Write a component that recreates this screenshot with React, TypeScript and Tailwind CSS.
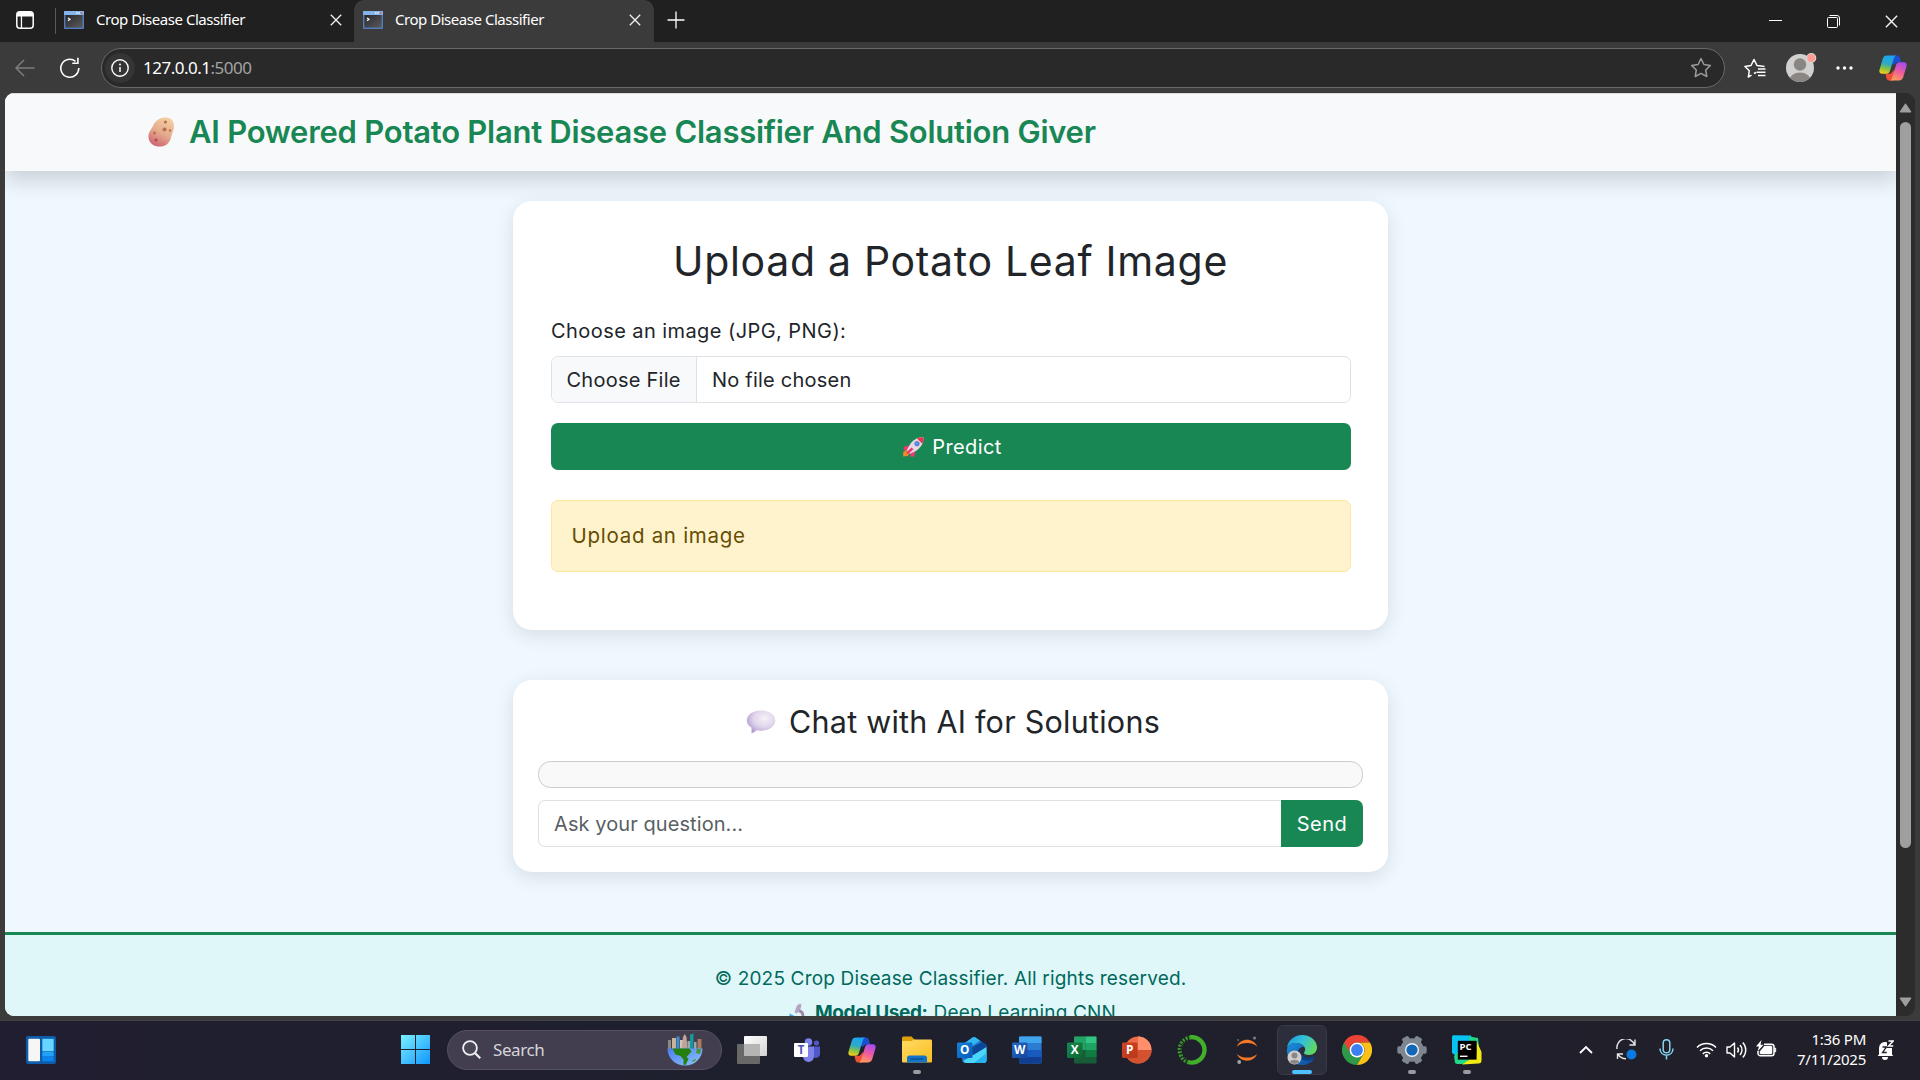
import type { ReactNode } from "react";

/* ---------- browser chrome icons ---------- */

function TerminalFavicon() {
  return (
    <svg width="20" height="18" viewBox="0 0 20 18" className="shrink-0">
      <defs>
        <linearGradient id="favDark" x1="0" y1="0" x2="1" y2="1">
          <stop offset="0" stopColor="#2a2a2c" />
          <stop offset="1" stopColor="#5a5a5c" />
        </linearGradient>
      </defs>
      <rect width="20" height="18" rx="0.8" fill="#4f7dbd" />
      <rect width="20" height="4" rx="0.8" fill="#84b4ea" />
      <rect x="12" y="1.2" width="1.6" height="1.6" fill="#dcecff" />
      <rect x="14.4" y="1.2" width="1.6" height="1.6" fill="#dcecff" />
      <rect x="16.8" y="1.2" width="1.6" height="1.6" fill="#e2573f" />
      <rect x="1.4" y="4" width="17.2" height="12.6" fill="url(#favDark)" />
      <path d="M4 7l2 1.3L4 9.800" stroke="#fff" strokeWidth="1.2" fill="none" />
    </svg>
  );
}

function CloseX({ size = 12 }: { size?: number }) {
  return (
    <svg width={size} height={size} viewBox="0 0 12 12" className="shrink-0">
      <path d="M.8.8l10.400 10.400M11.200.8L.8 11.200" stroke="#f2f2f2" strokeWidth="1.3" />
    </svg>
  );
}

function Copilot({ id }: { id: string }) {
  return (
    <svg width="28" height="26" viewBox="0 0 28 26" className="shrink-0">
      <defs>
        <linearGradient id={`${id}a`} x1="0.5" y1="0" x2="0.3" y2="1">
          <stop offset="0" stopColor="#1aa5ee" />
          <stop offset="0.45" stopColor="#2fa9c4" />
          <stop offset="0.72" stopColor="#86c440" />
          <stop offset="1" stopColor="#f6cd1d" />
        </linearGradient>
        <linearGradient id={`${id}b`} x1="0.7" y1="0" x2="0.35" y2="1">
          <stop offset="0" stopColor="#a44df0" />
          <stop offset="0.5" stopColor="#ec5aa0" />
          <stop offset="1" stopColor="#ff9a5c" />
        </linearGradient>
      </defs>
      <path d="M14 .6h4.200c1.500 0 2.300 1 2.700 2.400l1.300 4.400h-3.600c-2 0-3 1-3.500 2.700L12 8z" fill="#1c4fd0" />
      <path d="M6.500 18.700h5.200L15 15l1.500 5-2.300 5.400H10c-1.500 0-2.200-.9-2.600-2.300z" fill="#ee4f37" />
      <path d="M8.200.6h9c-1.500.5-2 1.700-2.500 3.200l-3.700 12c-.6 2-1.700 2.900-3.600 2.900H3.200C.8 18.700-.1 17 .5 14.800L3.700 4C4.400 1.700 5.700.6 8.200.6z" fill={`url(#${id}a)`} />
      <path d="M19.800 25.400h-9c1.500-.5 2-1.700 2.500-3.200l3.700-12c.6-2 1.700-2.900 3.600-2.900h4.200c2.400 0 3.300 1.700 2.700 3.900L24.300 22c-.7 2.300-2 3.400-4.500 3.400z" fill={`url(#${id}b)`} />
    </svg>
  );
}

function Tab({ active }: { active?: boolean }) {
  return (
    <div
      className={
        active
          ? "flex h-[42px] w-[300px] items-center rounded-t-[10px] bg-[#3b3b3b] pr-[13px] pl-[9px]"
          : "flex h-[42px] w-[298px] items-center pr-[12px] pl-[8px]"
      }
    >
      <div className="flex w-full items-center pb-[3px]">
        <TerminalFavicon />
        <span className="ml-3 flex-1 pb-[2px] whitespace-nowrap text-[15px] leading-[18px] tracking-[-0.47px] text-white">
          Crop Disease Classifier
        </span>
        <div className="pt-px">
          <CloseX />
        </div>
      </div>
    </div>
  );
}

function BrowserTop() {
  return (
    <header className="shrink-0">
      <div className="flex h-[42px] items-center bg-[#202020]">
        <svg width="18" height="18" viewBox="0 0 18 18" className="mb-[2px] ml-4">
          <rect x=".8" y=".8" width="16.400" height="16.400" rx="3" fill="none" stroke="#fff" strokeWidth="1.500" />
          <path d="M1 4a3 3 0 013-3h10a3 3 0 013 3v1.600H1zM4.800 5h1.300v12H4.800z" fill="#fff" />
        </svg>
        <div className="ml-[21px] h-[26px] w-px bg-[#5a5a5a]" />
        <Tab />
        <Tab active />
        <svg width="18" height="18" viewBox="0 0 18 18" className="mb-[3px] ml-[13px]">
          <path d="M9 .5v17M.5 9h17" stroke="#fff" strokeWidth="1.300" />
        </svg>
        <div className="ml-auto flex items-center pr-[22px]">
          <svg width="13" height="14" viewBox="0 0 13 14">
            <path d="M0 6.500h13" stroke="#fff" strokeWidth="1" />
          </svg>
          <svg width="13" height="13" viewBox="0 0 13 13" className="ml-[45px]">
            <path d="M.5 3.500a1 1 0 011-1h8a1 1 0 011 1v8a1 1 0 01-1 1h-8a1 1 0 01-1-1zM2.500.5h7.500a2.500 2.500 0 012.500 2.500v7.500" fill="none" stroke="#fff" />
          </svg>
          <div className="ml-[45px]">
            <CloseX size={13} />
          </div>
        </div>
      </div>
      <div className="flex h-[51px] items-center bg-[#3b3b3b]">
        <svg width="20" height="18" viewBox="0 0 20 18" className="ml-[15px]">
          <path d="M19.500 9H1M9 1L1 9l8 8" fill="none" stroke="#7d7d7d" strokeWidth="1.500" />
        </svg>
        <svg width="22" height="22" viewBox="0 0 22 22" className="ml-[24px]">
          <path d="M19.800 11A9 9 0 1116.500 4.300" fill="none" stroke="#fff" strokeWidth="1.600" />
          <path d="M18.900.8v5.400h-5.600" fill="none" stroke="#fff" strokeWidth="1.600" />
        </svg>
        <div className="ml-5 flex h-10 w-[1624px] items-center rounded-full border-[1.5px] border-[#6a6a6a] bg-[#292929] pr-[12px] pl-[3px]">
          <div className="flex size-[30px] items-center justify-center rounded-full bg-[#353535]">
            <svg width="18" height="18" viewBox="0 0 18 18">
              <circle cx="9" cy="9" r="8.200" fill="none" stroke="#fff" strokeWidth="1.400" />
              <path d="M9 8v5" stroke="#fff" strokeWidth="1.500" />
              <circle cx="9" cy="5.500" r="1" fill="#fff" />
            </svg>
          </div>
          <span className="ml-[8px] flex-1 whitespace-nowrap text-[17px] tracking-[-0.5px] text-white">
            127.0.0.1<span className="text-[#a3a3a3]">:5000</span>
          </span>
          <svg width="22" height="22" viewBox="0 0 22 22">
            <path d="M11 1.500l2.900 6 6.500.9-4.700 4.600 1.100 6.500-5.800-3.100-5.800 3.100 1.100-6.500L1.600 8.400l6.500-.9z" fill="none" stroke="#9a9a9a" strokeWidth="1.500" strokeLinejoin="round" />
          </svg>
        </div>
        <svg width="22" height="20" viewBox="0 0 22 20" className="ml-[19px]">
          <path d="M7.500 17.200L4.300 19l1-6.200L1 8.400l6-.9L10 1.500l3 6 7.500.9M10 15.500l2-1" fill="none" stroke="#fff" strokeWidth="1.500" strokeLinejoin="round" />
          <path d="M14 11h7.500M12.500 14.200h9M14 17.400h7.500" stroke="#fff" strokeWidth="1.500" />
        </svg>
        <svg width="31" height="30" viewBox="0 0 31 30" className="mb-[1px] ml-5">
          <defs>
            <clipPath id="avatarClip">
              <circle cx="14" cy="16" r="14" />
            </clipPath>
          </defs>
          <circle cx="14" cy="16" r="14" fill="#d2d0ce" />
          <g clipPath="url(#avatarClip)" fill="#8a8684">
            <circle cx="14" cy="12.500" r="6.200" />
            <ellipse cx="14" cy="28" rx="10.500" ry="7.500" />
          </g>
          <circle cx="25.300" cy="6" r="5" fill="#d9d7d5" />
          <circle cx="25.300" cy="6" r="4" fill="#ff9d96" />
        </svg>
        <svg width="17" height="4" viewBox="0 0 17 4" className="ml-[19px]">
          <circle cx="2" cy="2" r="1.700" fill="#fff" />
          <circle cx="8.500" cy="2" r="1.700" fill="#fff" />
          <circle cx="15" cy="2" r="1.700" fill="#fff" />
        </svg>
        <div className="ml-[26px]">
          <Copilot id="cpTop" />
        </div>
      </div>
    </header>
  );
}

/* ---------- page emoji ---------- */

function Potato() {
  return (
    <svg width="27" height="30" viewBox="0 0 27 30" className="shrink-0">
      <defs>
        <linearGradient id="potato" x1="0.75" y1="0" x2="0.3" y2="1">
          <stop offset="0" stopColor="#f5d0a4" />
          <stop offset="0.55" stopColor="#e3a98c" />
          <stop offset="1" stopColor="#cf6474" />
        </linearGradient>
      </defs>
      <path d="M17 .5c5-.6 9 3 9 8.500 0 4.500-2 7-3 11.500C21.800 26.500 17 30 10.500 29.500 4 29 .3 24.500.5 19c.2-4.500 3-6.800 5-11C7.800 3.300 11 1.200 17 .5z" fill="url(#potato)" />
      <g fill="#b9704c">
        <circle cx="17.500" cy="5" r="1.600" />
        <circle cx="16.500" cy="12.500" r="2.100" />
        <circle cx="22" cy="13.500" r="1.200" />
        <circle cx="6.500" cy="16" r="1.500" />
        <circle cx="8" cy="23" r="1.500" fill="#a84a52" />
      </g>
    </svg>
  );
}

function Rocket() {
  return (
    <svg width="21" height="20" viewBox="0 0 21 20" className="shrink-0">
      <path d="M3.500 12.500L.3 15.200 0 19.500l4.500-.5 3-3z" fill="#ef8a2c" />
      <path d="M6.500 8.300L1.500 9.500.3 13.500l5-.5zM12.500 14.200l-1.300 5.300-4 .3 1-5z" fill="#f0386f" />
      <path d="M20.500.3c-6-.2-10.500 2.500-13.500 7.200L3.800 13l3.500 3.700 5.900-3C18 10.500 20.700 6 20.500.3z" fill="#e4d8e8" />
      <path d="M20.500.3c-2.500-.1-4.500.3-6.500 1.200l5.300 5.200c.9-2 1.300-4.100 1.200-6.400z" fill="#ee3350" />
      <path d="M8.500 10.500l2 1.800-5.500 5-1.800-1.800z" fill="#f0386f" />
      <circle cx="14" cy="6.700" r="2.200" fill="#4b9cf2" stroke="#5a5da8" strokeWidth="0.8" />
    </svg>
  );
}

function SpeechBubble() {
  return (
    <svg width="30" height="24" viewBox="0 0 30 24" className="shrink-0">
      <defs>
        <radialGradient id="bubble" cx="0.62" cy="0.35" r="0.7">
          <stop offset="0" stopColor="#f5f1f8" />
          <stop offset="0.55" stopColor="#e0d5ea" />
          <stop offset="1" stopColor="#b29bd2" />
        </radialGradient>
      </defs>
      <path d="M15 .5c8 0 14.300 4.200 14.300 10S23 20.700 15 20.700c-1.700 0-3.200-.2-4.500-.5-1.500 1.500-3.200 2.600-5 3v-5.400C2.500 16 .8 13.500.8 10.500.8 4.700 7 .5 15 .5z" fill="url(#bubble)" />
    </svg>
  );
}

function Microscope() {
  return (
    <svg width="18" height="20" viewBox="0 0 18 20" className="shrink-0">
      <path d="M8 2.500l3-2 1.500 1.500-1.500 6-3.500 2.500-2-1.500z" fill="#b3a4c0" />
      <path d="M10.500 6.500c4 1 5.500 4 4.500 8l-2 3H9l3.500-3.500c.5-2-.5-4-2.500-4.500z" fill="#9a88a8" />
      <path d="M.5 10.500l6 3-1 2-5-2z" fill="#3fa7ef" />
      <path d="M2 17h14v3H2z" fill="#6e5d7d" />
    </svg>
  );
}

/* ---------- page ---------- */

function UploadCard() {
  return (
    <section className="h-[429px] w-[875px] rounded-[19px] bg-white px-[38px] pt-[38px] shadow-[0_5px_19px_rgba(0,0,0,0.11)]">
      <h2 className="text-center text-[41px] leading-[45px] tracking-[0.68px] text-[#212529]">
        Upload a Potato Leaf Image
      </h2>
      <p className="mt-8 text-[20px] leading-[30px] tracking-[0.43px]">Choose an image (JPG, PNG):</p>
      <div className="mt-[10px] flex h-[47px] w-[800px] items-center overflow-hidden rounded-[7px] border border-[#dee2e6] bg-white text-[20px]">
        <span className="flex h-full w-[145px] items-center border-r border-[#dee2e6] bg-[#f8f9fa] pl-[14.5px] tracking-[0.25px] whitespace-nowrap">
          Choose File
        </span>
        <span className="ml-[15px] tracking-[0.22px]">No file chosen</span>
      </div>
      <div className="mt-5 flex h-[47px] w-[800px] items-center justify-center gap-[8px] rounded-[7px] bg-[#198754] pl-[3px] text-[20px] tracking-[0.38px] text-white">
        <Rocket />
        Predict
      </div>
      <div className="mt-[30px] flex h-[72px] w-[800px] items-center rounded-[7px] border border-[#ffe69c] bg-[#fff3cd] px-[19.5px] text-[20.500px] tracking-[0.72px] text-[#664d03]">
        Upload an image
      </div>
    </section>
  );
}

function ChatCard() {
  return (
    <section className="mt-[50px] h-[192px] w-[875px] rounded-[19px] bg-white px-[25px] pt-[25px] shadow-[0_5px_19px_rgba(0,0,0,0.11)]">
      <h4 className="flex h-[34px] items-center justify-center gap-[13px] pl-[5px] text-[30.500px] tracking-[0.25px] whitespace-nowrap">
        <SpeechBubble />
        Chat with AI for Solutions
      </h4>
      <div className="mt-[22px] h-[27px] rounded-[12.5px] border border-[#ccc] bg-[#f9f9f9]" />
      <div className="mt-3 flex h-[47px] text-[20px]">
        <div className="flex flex-1 items-center rounded-l-[7px] border border-r-0 border-[#dee2e6] pl-[15px] tracking-[0.08px] text-[#595f64]">
          Ask your question...
        </div>
        <div className="flex w-[82px] items-center justify-center rounded-r-[7px] bg-[#198754] tracking-[0.48px] text-white">
          Send
        </div>
      </div>
    </section>
  );
}

function Page() {
  return (
    <div className="flex h-[923px] w-[1891px] flex-col overflow-hidden rounded-tl-[9px] rounded-bl-[9px] bg-[#f0f8ff] font-[Inter,sans-serif] text-[#212529]">
      <div className="z-0 flex h-[78px] shrink-0 items-center border-t border-[#dcdcdc] bg-[#f8f9fa] pb-px pl-[143px] shadow-[0_10px_20px_rgba(0,0,0,0.16)]">
        <Potato />
        <h1 className="ml-[14px] text-[31px] font-semibold tracking-[-0.26px] whitespace-nowrap text-[#198754]">
          AI Powered Potato Plant Disease Classifier And Solution Giver
        </h1>
      </div>
      <main className="z-10 mt-[30px] flex h-[731px] shrink-0 flex-col items-center">
        <UploadCard />
        <ChatCard />
      </main>
      <footer className="shrink-0 border-t-[3px] border-[#198754] bg-[#e0f7fa] pt-[27px] pb-10 text-center text-[19px] leading-[34px] text-[#00695c]">
        <p className="tracking-[0.17px]">© 2025 Crop Disease Classifier. All rights reserved.</p>
        <p className="flex items-center justify-center pl-1">
          <Microscope />
          <b className="ml-[8px] font-bold tracking-[-0.35px]">Model Used:</b>
          <span className="ml-[6px] tracking-[0.17px]">Deep Learning CNN</span>
        </p>
      </footer>
    </div>
  );
}

function Scrollbar() {
  return (
    <div className="flex h-[923px] w-[19px] flex-col items-center rounded-r-[9px] bg-[#2c2c2c] pt-[10px] pb-[9px]">
      <svg width="13" height="10" viewBox="0 0 13 10">
        <path d="M6.500.8L12 9H1z" fill="#9f9f9f" stroke="#9f9f9f" strokeWidth="1" strokeLinejoin="round" />
      </svg>
      <div className="mt-[9px] h-[726px] w-[11px] rounded-full bg-[#9f9f9f]" />
      <svg width="13" height="10" viewBox="0 0 13 10" className="mt-auto">
        <path d="M6.500 9.200L12 1H1z" fill="#9f9f9f" stroke="#9f9f9f" strokeWidth="1" strokeLinejoin="round" />
      </svg>
    </div>
  );
}

/* ---------- taskbar ---------- */

function SearchCity() {
  return (
    <svg width="36" height="33" viewBox="0 0 36 33">
      <defs>
        <linearGradient id="sea" x1="0" y1="0" x2="1" y2="1">
          <stop offset="0" stopColor="#4a7df0" />
          <stop offset="1" stopColor="#8fc6f8" />
        </linearGradient>
      </defs>
      <path d="M1 7h3v9H1z" fill="#8d8a7d" />
      <path d="M5 5h4v11H5z" fill="#c9b49a" />
      <path d="M9.500 3.500h3V16h-3z" fill="#3e8fd8" />
      <path d="M13 7h3v9h-3z" fill="#d8c3ae" />
      <path d="M16 4l1.800-3L19.500 4l1 12h-6z" fill="#bfa595" />
      <path d="M23 1.500l3.500-1V16H23z" fill="#17989a" />
      <path d="M20.500 8h2.500v8h-2.500zM27 9h2.500v7H27z" fill="#9ba7b5" />
      <path d="M30.500 6h4v10h-4z" fill="#a87c5d" />
      <path d="M.5 15.500h35C35.500 25 28 32.500 18 32.500S.5 25 .5 15.500z" fill="url(#sea)" />
      <path d="M5.500 15.500h17l2 3-5 5.500 2 2-3 6-2-.5v-5l-3-3.500-5-1.500z" fill="#23800f" />
      <path d="M30 16h4l-1 5-4-1zM25 28l3-2 1 1-3 2z" fill="#3f9a2a" />
    </svg>
  );
}

function TaskView() {
  return (
    <svg width="30" height="28" viewBox="0 0 30 28">
      <defs>
        <linearGradient id="tv" x1="0" y1="0" x2="1" y2="1">
          <stop offset="0" stopColor="#fff" />
          <stop offset="1" stopColor="#d2d2d2" />
        </linearGradient>
      </defs>
      <rect x="7" y="0" width="23" height="20" rx="1" fill="url(#tv)" />
      <rect x="0" y="8" width="23" height="20" rx="1" fill="#686868" />
      <path d="M7 8h16v12H7z" fill="#b5b5b5" />
    </svg>
  );
}

function Teams() {
  return (
    <svg width="26" height="24" viewBox="0 0 26 24">
      <circle cx="22.500" cy="5" r="2.600" fill="#5059c9" />
      <circle cx="14.500" cy="4" r="3.800" fill="#7b83eb" />
      <path d="M19 8.500h7v7a4 4 0 01-7 3z" fill="#5059c9" />
      <path d="M9 8.500h11V18a5.500 5.500 0 01-11 1z" fill="#7b83eb" />
      <rect x="0" y="5" width="14" height="14" rx="1" fill="#fff" />
      <text x="7" y="16" textAnchor="middle" fontSize="11.500" fontWeight="700" fill="#4b53bc" fontFamily="Open Sans">T</text>
    </svg>
  );
}

function Folder() {
  return (
    <svg width="30" height="27" viewBox="0 0 30 27">
      <defs>
        <linearGradient id="fold" x1="0" y1="0" x2="1" y2="1">
          <stop offset="0" stopColor="#ffdc66" />
          <stop offset="1" stopColor="#f9bc1e" />
        </linearGradient>
      </defs>
      <path d="M0 2a1.500 1.500 0 011.500-1.500h8L13 4v4H0z" fill="#e0a007" />
      <path d="M0 6.500c0-1 .5-1.500 1.500-1.500h8l2.500-1.500h16.500c1 0 1.500.6 1.500 1.500v20c0 1-.5 1.500-1.500 1.500h-27C.5 26.500 0 26 0 25z" fill="url(#fold)" />
      <path d="M5 26.500V22a2.500 2.500 0 012.500-2.500h15A2.500 2.500 0 0125 22v4.500z" fill="#1374ca" />
      <path d="M8.500 23h13" stroke="#0a4a86" strokeWidth="1.200" />
    </svg>
  );
}

function OfficeLetter({ letter, from, to }: { letter: string; from: string; to: string }) {
  return (
    <>
      <defs>
        <linearGradient id={`office${letter}`} x1="0" y1="0" x2="1" y2="1">
          <stop offset="0" stopColor={from} />
          <stop offset="1" stopColor={to} />
        </linearGradient>
      </defs>
      <rect x="0" y="6.500" width="15.500" height="15.500" rx="1.300" fill={`url(#office${letter})`} />
      <text x="7.600" y="18.400" textAnchor="middle" fontSize="11.800" fontWeight="700" fill="#fff" fontFamily="Open Sans">
        {letter}
      </text>
    </>
  );
}

function Outlook() {
  return (
    <svg width="30" height="28" viewBox="0 0 30 28">
      <path d="M5 9L15.500 1.500a2.500 2.500 0 013 0L29.500 9v15a3 3 0 01-3 3H9a4 4 0 01-4-4z" fill="#1b78d0" />
      <path d="M5 9L15.500 1.500a2.500 2.500 0 013 0l4.500 3L8 15H5z" fill="#33b7f2" />
      <path d="M12 13L25 6l4.500 3v3L17 20z" fill="#0b4698" />
      <path d="M29.500 11v13a3 3 0 01-3 3H9.500a4 4 0 01-3.500-2l12-7z" fill="#4bd6fb" />
      <path d="M17 27L29.500 17v7a3 3 0 01-3 3z" fill="#27b3f0" />
      <OfficeLetter letter="O" from="#1480d8" to="#0a5cb8" />
    </svg>
  );
}

function Word() {
  return (
    <svg width="30" height="28" viewBox="0 0 30 28">
      <rect x="7" y="0.500" width="22.500" height="27" rx="1.300" fill="#2b7cd3" />
      <path d="M7 1.500a1 1 0 011-1h20.500a1 1 0 011 1V7H7z" fill="#41a5ee" />
      <path d="M7 14h22.500v7H7z" fill="#185abd" />
      <path d="M7 21h22.500v5.500a1 1 0 01-1 1H8a1 1 0 01-1-1z" fill="#103f91" />
      <OfficeLetter letter="W" from="#2368c4" to="#1447a0" />
    </svg>
  );
}

function Excel() {
  return (
    <svg width="30" height="28" viewBox="0 0 30 28">
      <rect x="7" y="0.500" width="22.500" height="27" rx="1.300" fill="#185c37" />
      <path d="M7 1.500a1 1 0 011-1h10.500V14H7z" fill="#21a366" />
      <path d="M18.500.5h10a1 1 0 011 1V7h-11z" fill="#33c481" />
      <path d="M18.500 7h11v7h-11z" fill="#21a366" />
      <path d="M18.500 14h11v7h-11z" fill="#107c41" />
      <OfficeLetter letter="X" from="#18884f" to="#0b6631" />
    </svg>
  );
}

function PowerPoint() {
  return (
    <svg width="30" height="28" viewBox="0 0 30 28">
      <circle cx="16" cy="14" r="13.500" fill="#ed6c47" />
      <path d="M16 .5A13.500 13.500 0 0129.500 14H16z" fill="#ff8f6b" />
      <path d="M2.500 14h27a13.500 13.500 0 01-27 0z" fill="#d35230" />
      <OfficeLetter letter="P" from="#d04423" to="#b9371a" />
    </svg>
  );
}

function Anaconda() {
  return (
    <svg width="30" height="30" viewBox="0 0 30 30">
      <path d="M13 2.300A12.700 12.700 0 1111 27" fill="none" stroke="#43b02a" strokeWidth="4.400" />
      <path d="M12 27.300A12.700 12.700 0 0114 2.400" fill="none" stroke="#3a9a28" strokeWidth="4" strokeDasharray="2 1.300" />
      <path d="M9.500 24.500A11 11 0 0112 4.300" fill="none" stroke="#1f202d" strokeWidth="1.200" strokeDasharray="1.500 2" />
    </svg>
  );
}

function Jupyter() {
  return (
    <svg width="22" height="28" viewBox="0 0 22 28">
      <path d="M.8 10.500C3 6 6.500 3.800 11 3.800s8 2.200 10.200 6.700C18.500 8 15 6.900 11 6.900S3.500 8 .8 10.500zM.8 18C3 22.500 6.500 24.700 11 24.700s8-2.200 10.200-6.700C18.500 20.500 15 21.600 11 21.600S3.500 20.500.8 18z" fill="#f37726" />
      <circle cx="18.500" cy="2" r="1.600" fill="#7c7c80" />
      <circle cx="2" cy="4" r="1" fill="#6b6b70" />
      <circle cx="3.200" cy="26" r="1.900" fill="#a2a2a4" />
    </svg>
  );
}

function Edge() {
  return (
    <svg width="30" height="30" viewBox="0 0 30 30">
      <defs>
        <linearGradient id="edgeTop" x1="0" y1="0.2" x2="1" y2="0.6">
          <stop offset="0" stopColor="#1b9de2" />
          <stop offset="0.5" stopColor="#35c1d8" />
          <stop offset="1" stopColor="#63d957" />
        </linearGradient>
        <linearGradient id="edgeLow" x1="0" y1="0" x2="1" y2="1">
          <stop offset="0" stopColor="#1c8fdc" />
          <stop offset="1" stopColor="#0c4a9c" />
        </linearGradient>
      </defs>
      <path d="M0 13C1 5.500 7 0 15 0c9 0 15 6 15 12.500 0 4.500-3.500 7.500-8 7.500-3 0-5-1-5-2.300 0-.8 1.200-1.400 1.200-3.300C18.200 11 14 8 9.500 8 5 8 1.500 10 0 13z" fill="url(#edgeTop)" />
      <path d="M0 14c1-3.500 4.500-6 9-6 3.500 0 6.500 1.500 8 4-3.500-.5-6 2-6 5.500 0 4.500 4 8 9.500 8 2.500 0 4.700-.6 6.500-1.800C24.500 27.700 20 30 15 30 6.500 30-.8 23 0 14z" fill="url(#edgeLow)" />
      <path d="M11 17.500c0 4.500 4 8 9.500 8 3 0 5.500-.9 7.500-2.700l-1.300-1.300c-1.500.8-3 1-5 1-5 0-9-3-9-7z" fill="#0b3f86" />
      <circle cx="7.500" cy="22.500" r="7" fill="#cfcdcb" />
      <circle cx="7.500" cy="20.500" r="3" fill="#8b8785" />
      <path d="M2.500 27a5.500 3.800 0 0110 0 7 7 0 01-10 0z" fill="#8b8785" />
    </svg>
  );
}

function Chrome() {
  return (
    <svg width="30" height="30" viewBox="0 0 30 30">
      <path d="M15 15l6.500 3.800L15 30A15 15 0 012 7.500z" fill="#2c9a48" />
      <path d="M2 7.500A15 15 0 0128 7.500H15a7.500 7.500 0 00-6.500 11.300z" fill="#ea4335" />
      <path d="M28 7.500A15 15 0 0115 30l6.500-11.200A7.500 7.500 0 0015 7.500z" fill="#fbc116" />
      <circle cx="15" cy="15" r="7.400" fill="#fff" />
      <circle cx="15" cy="15" r="5.900" fill="#3b7ff0" />
    </svg>
  );
}

function Settings() {
  return (
    <svg width="30" height="30" viewBox="0 0 30 30">
      <g fill="#7e868f">
        <circle cx="15" cy="15" r="11.800" />
        {[0, 60, 120].map((a) => (
          <rect key={a} x="0.300" y="11.300" width="29.400" height="7.400" rx="1.600" transform={`rotate(${a} 15 15)`} />
        ))}
      </g>
      <circle cx="15" cy="15" r="7" fill="#eef2f5" />
      <circle cx="15" cy="15" r="5.600" fill="#1266b8" />
    </svg>
  );
}

function PyCharm() {
  return (
    <svg width="30" height="30" viewBox="0 0 30 30">
      <path d="M0 2C0 .8.8.2 2 .2L19 .5l2 8L8 27 3 20 0 18z" fill="#07c3f2" />
      <path d="M17 1.500l9 1.500 1 9-8 5z" fill="#21d789" />
      <path d="M2 21l6-6 12 8-3 6H5.500C3.500 29 3 28 2.800 26.500z" fill="#21d789" />
      <path d="M25 7l4.500 10v8.500c0 2-1 3-3 3L10 29.500l14-9z" fill="#f3ea15" />
      <rect x="5.800" y="5.800" width="18.800" height="18.800" fill="#000" />
      <text x="7.600" y="15" fontSize="9.500" fontWeight="700" fill="#fff" fontFamily="Open Sans">PC</text>
      <path d="M8 21.300h7.500" stroke="#fff" strokeWidth="1.400" />
    </svg>
  );
}

function TaskItem({ children, state }: { children: ReactNode; state?: "running" | "active" }) {
  return (
    <div className="flex w-[55px] items-center justify-center">
      <div
        className={
          state === "active"
            ? "relative flex h-[50px] w-[50px] items-center justify-center rounded-[6px] border border-[#3a3a47] bg-[#2d2e3b]"
            : "relative flex h-[50px] w-[50px] items-center justify-center"
        }
      >
        {children}
        {state === "running" && <span className="absolute bottom-px left-[21px] h-1 w-2 rounded-full bg-[#9a9aa0]" />}
        {state === "active" && <span className="absolute bottom-0 left-[14px] h-1 w-5 rounded-full bg-[#4cc2ff]" />}
      </div>
    </div>
  );
}

function Tray() {
  return (
    <div className="ml-auto flex items-center pr-[26px] text-white">
      <svg width="14" height="9" viewBox="0 0 14 9">
        <path d="M1 8l6-6 6 6" fill="none" stroke="#fff" strokeWidth="1.800" />
      </svg>
      <svg width="21" height="21" viewBox="0 0 21 21" className="ml-[23px]">
        <path d="M1 10A9 9 0 0118.500 6M19 .5V6h-5.500M1.500 20v-5H7M2 15.500c2 2.800 4.600 4.200 8 4.200" fill="none" stroke="#e6e6e6" strokeWidth="1.400" />
        <circle cx="15.500" cy="15.500" r="5" fill="#0a7ae0" />
      </svg>
      <svg width="15" height="21" viewBox="0 0 15 21" className="ml-[22px]">
        <rect x="4.200" y=".8" width="6.600" height="13" rx="3.300" fill="none" stroke="#86d3ee" strokeWidth="1.500" />
        <path d="M1 9.500c0 4 2.700 6.700 6.500 6.700S14 13.500 14 9.500M7.500 16.200V20.500" fill="none" stroke="#86d3ee" strokeWidth="1.500" />
      </svg>
      <svg width="21" height="16" viewBox="0 0 21 16" className="ml-[22px]">
        <path d="M1 5.500a13.500 13.500 0 0119 0M4 8.800a9.200 9.200 0 0113 0M6.800 11.900a5.200 5.200 0 017.400 0" fill="none" stroke="#fff" strokeWidth="1.500" />
        <circle cx="10.500" cy="13.800" r="1.700" fill="#fff" />
      </svg>
      <svg width="21" height="18" viewBox="0 0 21 18" className="ml-[9px]">
        <path d="M1 6h3l4.500-4v14L4 12H1z" fill="none" stroke="#fff" strokeWidth="1.400" strokeLinejoin="round" />
        <path d="M11.500 6.500a4 4 0 010 5M14 4a7.300 7.300 0 010 10M16.800 1.500a11 11 0 010 15" fill="none" stroke="#fff" strokeWidth="1.400" />
      </svg>
      <svg width="21" height="17" viewBox="0 0 21 17" className="mb-[3px] ml-[9px]">
        <path d="M8 4.200h7.500a2.500 2.500 0 012.500 2.500v6.500a2.500 2.500 0 01-2.500 2.500h-11A2.500 2.500 0 012 13.200V11" fill="none" stroke="#fff" strokeWidth="1.500" />
        <path d="M8.500 6H15a1 1 0 011 1v6a1 1 0 01-1 1H5a1 1 0 01-1-1v-1.500zM18.500 8h1.300v4h-1.300z" fill="#fff" stroke="#fff" strokeWidth=".5" />
        <path d="M5.500 0L0 6.500h3l-1.500 5L7.500 4.800h-3z" fill="#fff" />
      </svg>
      <div className="mb-px ml-[19px] w-[70px] text-right text-[15px] leading-[20.500px] tracking-[-0.25px] whitespace-nowrap">
        <div>1:36 PM</div>
        <div>7/11/2025</div>
      </div>
      <svg width="17" height="20" viewBox="0 0 17 20" className="ml-[11px]">
        <path d="M2 14.500V8a6 6 0 018-5.700V8h5v6.500l1.300 1.500H.5zM5 17h6a3 3 0 01-6 0z" fill="#fff" />
        <path d="M5.500 7h4l-4 5.500h4.300" fill="none" stroke="#22212d" strokeWidth="1.300" />
        <path d="M11.500 1h4.700l-4.700 5h4.700" fill="none" stroke="#fff" strokeWidth="1.400" />
      </svg>
    </div>
  );
}

function Taskbar() {
  return (
    <footer className="flex h-[60px] shrink-0 items-center border-t border-[#42434a] bg-linear-to-r from-[#201e30] via-[#1e202d] to-[#211f29] pb-[2px]">
      <svg width="30" height="28" viewBox="0 0 30 28" className="ml-[26px]">
        <rect width="30" height="28" rx="2" fill="#0f5cab" />
        <rect x="2.300" y="2.800" width="11.700" height="22.500" rx="1" fill="#f6f6f6" />
        <rect x="16.300" y="2.800" width="11.400" height="12.500" fill="#66d5ff" />
        <rect x="16.300" y="16" width="11.400" height="4.500" fill="#1ea3fa" />
        <rect x="16.300" y="21" width="11.400" height="4.300" fill="#0a84ee" />
      </svg>
      <svg width="29" height="29" viewBox="0 0 29 29" className="ml-[345px]">
        <defs>
          <linearGradient id="win" x1="0" y1="0" x2="1" y2="1">
            <stop offset="0" stopColor="#7cf0ff" />
            <stop offset="1" stopColor="#0f96ff" />
          </linearGradient>
        </defs>
        <path d="M0 0h14v14H0zM15 0h14v14H15zM0 15h14v14H0zM15 15h14v14H15z" fill="url(#win)" />
      </svg>
      <div className="ml-[17px] flex h-10 w-[275px] items-center rounded-full border border-[#565062] bg-[#423e4f] pr-[18px] pl-[14px]">
        <svg width="19" height="19" viewBox="0 0 19 19">
          <circle cx="8" cy="8" r="6.900" fill="#4a4757" stroke="#f0f0f2" strokeWidth="1.800" />
          <path d="M13 13l5.200 5.200" stroke="#f0f0f2" strokeWidth="2.200" />
        </svg>
        <span className="ml-[12px] flex-1 text-[17px] tracking-[-0.4px] text-[#d6d4da]">Search</span>
        <SearchCity />
      </div>
      <div className="ml-[2px] flex">
        <TaskItem><TaskView /></TaskItem>
        <TaskItem><Teams /></TaskItem>
        <TaskItem><Copilot id="cpBar" /></TaskItem>
        <TaskItem state="running"><Folder /></TaskItem>
        <TaskItem><Outlook /></TaskItem>
        <TaskItem><Word /></TaskItem>
        <TaskItem><Excel /></TaskItem>
        <TaskItem><PowerPoint /></TaskItem>
        <TaskItem><Anaconda /></TaskItem>
        <TaskItem><Jupyter /></TaskItem>
        <TaskItem state="active"><Edge /></TaskItem>
        <TaskItem><Chrome /></TaskItem>
        <TaskItem state="running"><Settings /></TaskItem>
        <TaskItem state="running"><PyCharm /></TaskItem>
      </div>
      <Tray />
    </footer>
  );
}

export default function App() {
  return (
    <div className="flex h-[1080px] w-[1920px] flex-col overflow-hidden bg-[#3b3b3b] font-['Noto_Sans','Open_Sans',sans-serif]">
      <BrowserTop />
      <div className="flex h-[927px] shrink-0 pl-[5px]">
        <Page />
        <Scrollbar />
      </div>
      <Taskbar />
    </div>
  );
}
